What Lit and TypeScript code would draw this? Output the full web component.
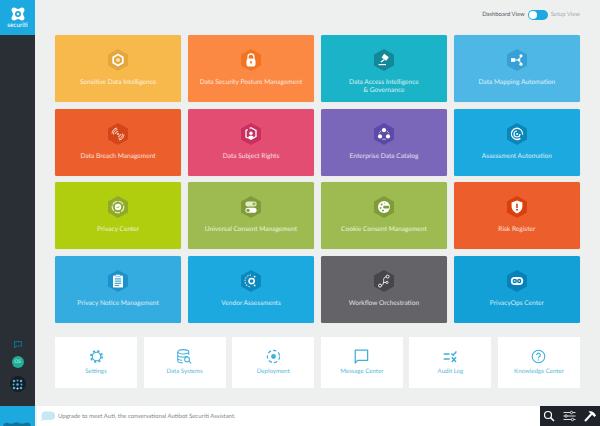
import { LitElement, html, css, svg } from "lit";
import { customElement } from "lit/decorators.js";

const W = "#fff";
const cards = [
  { label: ["Sensitive Data Intelligence"], bg: "#f8b94c", hex: "#e5a63e", icon: svg`<polygon points="10,5.5 14.8,8.2 14.8,13.8 10,16.5 5.2,13.8 5.2,8.2" fill="none" stroke="${W}" stroke-width="1.7" stroke-linejoin="round"/><circle cx="10" cy="11" r="2" fill="#fbe3b0"/>` },
  { label: ["Data Security Posture Management"], bg: "#fb8843", hex: "#f3741f", icon: svg`<path d="M7 10V8a3 3 0 0 1 6 0v2" fill="none" stroke="${W}" stroke-width="1.3"/><rect x="5.5" y="9.5" width="9" height="8" rx="2.6" fill="${W}"/><circle cx="10" cy="13" r="1" fill="#f3741f"/><rect x="9.6" y="13" width=".8" height="2.2" fill="#f3741f"/>` },
  { label: ["Data Access Intelligence", "& Governance"], bg: "#1ab3c7", hex: "#14889b", icon: svg`<g fill="${W}"><path d="M10.2 4.8l4.6 3.4-2.6 3.6-4.6-3.4z"/><path d="M9.6 10.2l1.2.9-3.6 2.4-.7-.9z"/><rect x="4.6" y="15" width="7.4" height="1.2"/></g>` },
  { label: ["Data Mapping Automation"], bg: "#4eb7e6", hex: "#35a1d6", icon: svg`<g fill="${W}"><rect x="4" y="9.2" width="4.2" height="3.6"/><circle cx="14" cy="6.8" r="1.6"/><circle cx="14" cy="15.2" r="1.6"/><circle cx="12" cy="11" r="1.4"/></g><path d="M8 11h4M14 7l-2 4 2 4" stroke="${W}" stroke-width="1" fill="none"/>` },
  { label: ["Data Breach Management"], bg: "#ec5e2b", hex: "#d5461a", icon: svg`<g fill="none" stroke="#fbdccd" stroke-width="1"><path d="M7.500 11A2.500 2.500 0 0 1 10 8.500M5.600 11.500A4.500 4.500 0 0 1 9.500 6.600M4 10.500A6.200 6.200 0 0 1 9 5"/><path d="M12.500 11A2.500 2.500 0 0 1 10 13.500M14.400 10.500A4.500 4.500 0 0 1 10.500 15.400M16 11.500A6.200 6.200 0 0 1 11 17"/></g><circle cx="10" cy="11" r="1" fill="#fbdccd"/>` },
  { label: ["Data Subject Rights"], bg: "#e34d72", hex: "#c9305f", icon: svg`<path d="M8.600 5.400L10 4.700l5 2.800v6l-2 1.200M6.800 15L5 14V7.500l1.800-1" fill="none" stroke="${W}" stroke-width="1.300"/><circle cx="10" cy="10.200" r="1.700" fill="${W}"/><path d="M6.800 15.200c.6-2 1.800-2.700 3.200-2.700s2.600.7 3.200 2.700L10 17z" fill="${W}"/>` },
  { label: ["Enterprise Data Catalog"], bg: "#7a67b9", hex: "#5d4aa8", icon: svg`<g fill="${W}"><circle cx="10" cy="7.200" r="2.100"/><circle cx="6" cy="13.400" r="2.100"/><circle cx="14" cy="13.400" r="2.100"/></g><path d="M7 8.200a5 5 0 0 0-1.800 2M13 8.200a5 5 0 0 1 1.800 2M8 16a5 5 0 0 0 4 0" fill="none" stroke="${W}" stroke-width=".6"/>` },
  { label: ["Assessment Automation"], bg: "#1ca9df", hex: "#0b86b8", icon: svg`<path d="M13 15.600A5.600 5.600 0 1 1 15.600 11" fill="none" stroke="${W}" stroke-width="1.300" stroke-linecap="round"/><path d="M10 8a3 3 0 1 0 3 3" fill="none" stroke="${W}" stroke-width="1.200"/><circle cx="10.200" cy="11" r="1.100" fill="${W}"/>` },
  { label: ["Privacy Center"], bg: "#b0cd0e", hex: "#8faa2c", icon: svg`<circle cx="10" cy="11" r="5.800" fill="none" stroke="#eef3c8" stroke-width="1.200" stroke-dasharray="5.500 1.300"/><circle cx="10" cy="11" r="3.200" fill="${W}"/><path d="M8.600 11l1 1 1.800-1.900" fill="none" stroke="#8faa2c" stroke-width=".9"/>` },
  { label: ["Universal Consent Management"], bg: "#9dbb50", hex: "#7f9c39", icon: svg`<rect x="4.400" y="5.400" width="11.200" height="5" rx="2.500" fill="#e3ebc8"/><circle cx="13" cy="7.900" r="1.600" fill="#9dbb50"/><rect x="4.400" y="11.800" width="11.200" height="5" rx="2.500" fill="${W}"/><circle cx="7" cy="14.300" r="1.600" fill="#7f9c39"/>` },
  { label: ["Cookie Consent Management"], bg: "#9dbb50", hex: "#7f9c39", icon: svg`<circle cx="10" cy="11" r="6" fill="${W}"/><g fill="#7f9c39"><circle cx="7.600" cy="8.600" r="1"/><circle cx="6.600" cy="12" r=".9"/><circle cx="9" cy="14.400" r="1"/><circle cx="10.600" cy="7" r=".6"/><rect x="9.200" y="9.800" width="6" height="2.600" rx="1.200"/></g>` },
  { label: ["Risk Register"], bg: "#ec5e2b", hex: "#d8410e", icon: svg`<path d="M10 4.600l5.400 2v4.200c0 3-2.400 5.200-5.400 6.600-3-1.400-5.400-3.600-5.400-6.600V6.600z" fill="${W}"/><rect x="9.200" y="7.600" width="1.600" height="4.600" rx=".7" fill="#d8410e"/><circle cx="10" cy="13.800" r="1" fill="#d8410e"/>` },
  { label: ["Privacy Notice Management"], bg: "#35ace0", hex: "#1b92cb", icon: svg`<rect x="5" y="5.600" width="10" height="12" rx="1.200" fill="${W}"/><rect x="7.600" y="4.400" width="4.800" height="2.200" rx=".6" fill="${W}" stroke="#1b92cb" stroke-width=".5"/><g fill="#1b92cb"><rect x="6.800" y="8.400" width="6.400" height="1"/><rect x="6.800" y="10.600" width="6.400" height="1"/><rect x="6.800" y="12.800" width="6.400" height="1"/><rect x="6.800" y="15" width="4.400" height=".9"/></g>` },
  { label: ["Vendor Assessments"], bg: "#1ca9df", hex: "#0c88bc", icon: svg`<path d="M10 5a6 6 0 0 0 0 12" fill="none" stroke="#cdeaf6" stroke-width="1.100" stroke-dasharray="1.400 1.200"/><circle cx="10.600" cy="11" r="2.600" fill="none" stroke="${W}" stroke-width="1.500"/><circle cx="13.600" cy="6.600" r=".9" fill="${W}"/><circle cx="13.600" cy="15.400" r=".9" fill="${W}"/>` },
  { label: ["Workflow Orchestration"], bg: "#636368", hex: "#46464b", icon: svg`<circle cx="13.600" cy="6.600" r="1.500" fill="none" stroke="${W}" stroke-width=".9"/><circle cx="6" cy="15.600" r="1.500" fill="none" stroke="${W}" stroke-width=".9"/><circle cx="13" cy="12.400" r="1.100" fill="none" stroke="${W}" stroke-width=".8"/><path d="M12.200 6.800c-3 .4-2.600 3.400-2.600 5 0 2-1 3.400-2.200 3.600M9.800 12.400h2.100" fill="none" stroke="${W}" stroke-width=".9"/>` },
  { label: ["PrivacyOps Center"], bg: "#12a0d7", hex: "#0a80b8", icon: svg`<rect x="3.800" y="7" width="12.400" height="8" rx="4" fill="${W}"/><circle cx="7.800" cy="11" r="2.200" fill="#0a80b8"/><circle cx="12.200" cy="11" r="2.200" fill="#0a80b8"/><circle cx="7.800" cy="11" r=".8" fill="${W}"/><circle cx="12.200" cy="11" r=".8" fill="${W}"/>` },
];

const B = "#3fb0dc";
const tools = [
  { label: "Settings", icon: svg`<circle cx="10" cy="10" r="5" fill="none" stroke="${B}" stroke-width="1.400"/><circle cx="10" cy="10" r="6.600" fill="none" stroke="${B}" stroke-width="2" stroke-dasharray="2.600 2.600"/>` },
  { label: "Data Systems", icon: svg`<g fill="none" stroke="${B}" stroke-width="1.200"><ellipse cx="8.500" cy="4.500" rx="6.500" ry="2.600"/><path d="M2 4.500v10.500c0 1.400 2.800 2.400 6 2.400M15 4.500V8M2 8.200c0 1.400 3 2.500 6.500 2.500 2 0 4-.4 5.200-1M2 12c0 1.300 2.400 2.300 5.400 2.400"/><circle cx="13" cy="13.400" r="2.800"/><path d="M15 15.400l3 2.600"/></g>` },
  { label: "Deployment", icon: svg`<circle cx="10" cy="10" r="7.200" fill="none" stroke="${B}" stroke-width="1.400" stroke-dasharray="4 2.500"/><circle cx="10" cy="10" r="2.800" fill="${B}"/>` },
  { label: "Message Center", icon: svg`<path d="M2.600 2.600h14.600v12H5.400L2.600 17.600z" fill="none" stroke="${B}" stroke-width="1.500" stroke-linejoin="round"/>` },
  { label: "Audit Log", icon: svg`<g fill="none" stroke="${B}" stroke-width="1.700"><path d="M2 7h7M2 13h7M11 6.500l2 2 4-4.500M11.500 11l5 5.500M16.500 11l-5 5.500"/></g>` },
  { label: "Knowledge Center", icon: svg`<circle cx="10" cy="10" r="7.400" fill="none" stroke="${B}" stroke-width="1.300"/><path d="M7.800 8.300a2.200 2.200 0 1 1 3.400 1.800c-.8.500-1.200.9-1.200 1.900" fill="none" stroke="${B}" stroke-width="1.300"/><circle cx="10" cy="14" r=".8" fill="${B}"/>` },
];

@customElement("app-root")
export class AppRoot extends LitElement {
  static styles = css`
    :host { display: block; width: 600px; height: 426px; overflow: hidden; background: #eef0f0; font-family: "Lato", "Open Sans", sans-serif; text-rendering: geometricPrecision; }
    .shell { display: grid; grid-template-columns: 35px 1fr; height: 426px; }
    .side { display: flex; flex-direction: column; background: #2a2e35; }
    .logo { height: 35px; background: #1ca9df; display: flex; flex-direction: column; align-items: center; color: #fff; font-size: 6.4px; line-height: 8px; padding-top: 7px; box-sizing: border-box; }
    .logo svg { display: block; margin-bottom: 1px; }
    .rail { flex: 1; display: flex; flex-direction: column; align-items: center; justify-content: flex-end; padding-bottom: 14px; }
    .rail svg { display: block; }
    .chat { margin-bottom: 8px; }
    .avatar { width: 12px; height: 12px; border-radius: 50%; background: #1fae98; color: #c5efe6; font-size: 5px; line-height: 12px; text-align: center; margin-bottom: 8px; }
    .apps { width: 16px; height: 16px; border-radius: 50%; background: #191c23; display: flex; align-items: center; justify-content: center; }
    .foot { height: 20px; background: #1ca9df; display: flex; align-items: flex-end; }
    .main { display: flex; flex-direction: column; min-width: 0; }
    .top { height: 35px; box-sizing: border-box; display: flex; justify-content: flex-end; align-items: flex-start; gap: 3px; padding: 10px 20px 0 0; font-size: 5.9px; line-height: 10px; color: #55595e; }
    .top .off { color: #a6abae; }
    .switch { width: 20px; height: 10px; border-radius: 5px; background: #1ca9df; position: relative; }
    .switch::after { content: ""; position: absolute; left: 1px; top: 1px; width: 8px; height: 8px; border-radius: 50%; background: #fff; }
    .grid { display: grid; grid-template-columns: repeat(4, 1fr); grid-auto-rows: 67px; gap: 6.67px; padding: 0 20px; }
    .card { border-radius: 1.5px; display: flex; flex-direction: column; align-items: center; padding-top: 14px; box-sizing: border-box; color: #fff; font-size: 6.6px; line-height: 7.5px; text-align: center; box-shadow: 0 0 1px rgba(0,0,0,.12); }
    .card svg { display: block; margin-bottom: 8px; }
    .card span { opacity: .8; display: block; }
    .small { display: grid; grid-template-columns: repeat(6, 1fr); gap: 6.6px; padding: 13.7px 20px 0; }
    .tool { height: 51px; background: #fff; display: flex; flex-direction: column; align-items: center; box-sizing: border-box; padding-top: 11px; color: #57b7db; font-size: 6.1px; line-height: 8px; }
    .tool svg { display: block; margin-bottom: 3px; }
    .bar { margin-top: auto; height: 20px; display: flex; padding-left: 2px; }
    .msg { flex: 1; background: #fff; display: flex; align-items: center; padding-left: 3px; gap: 3px; font-size: 6px; color: #7f898e; }
    .msg svg { display: block; }
    .actions { width: 60px; background: #1f2329; display: flex; align-items: center; gap: 8px; padding-left: 3px; box-sizing: border-box; }
    .actions svg { display: block; }
  `;

  render() {
    return html`
      <div class="shell">
        <aside class="side">
          <div class="logo">
            <svg width="14" height="14" viewBox="0 0 14 14"><path d="M3 .5C4.500 .5 5.500 2 7 2S9.500 .5 11 .5 13.500 1.500 13.500 3 12 5.500 12 7s1.500 2.500 1.500 4-1 2.500-2.500 2.500S8.500 12 7 12s-2.500 1.500-4 1.500S.5 12.500 .5 11 2 8.500 2 7 .5 4.500 .5 3 1.500 .5 3 .5z" fill="#fff"/><circle cx="7" cy="7" r="3" fill="#1ca9df"/><circle cx="7" cy="7" r="1.300" fill="#fff"/></svg>
            securiti
          </div>
          <div class="rail">
            <svg class="chat" width="8" height="7" viewBox="0 0 8 7"><path d="M.6 .6h6.800v4.400H2.500L.6 6.500z" fill="none" stroke="#0f6b86" stroke-width="1.200"/></svg>
            <div class="avatar">OS</div>
            <div class="apps">
              <svg width="11" height="11" viewBox="0 0 11 11"><g fill="#3fb6e4"><circle cx="2" cy="2" r="1.300"/><circle cx="5.500" cy="1.500" r="1"/><circle cx="9" cy="2" r="1.300"/><circle cx="1.500" cy="5.500" r="1"/><circle cx="5.500" cy="5.500" r="1.300"/><circle cx="9.500" cy="5.500" r="1"/><circle cx="2" cy="9" r="1.300"/><circle cx="5.500" cy="9.500" r="1" fill="#dff3fb"/><circle cx="9" cy="9" r="1.300"/></g></svg>
            </div>
          </div>
          <div class="foot">
            <svg width="35" height="6" viewBox="0 0 35 6" style="display:block"><path d="M3 6c1-3 3-4 5-3s4 1 6 0 3-1 5 0 4 1 6 0 5-1 6 3z" fill="#11729a"/></svg>
          </div>
        </aside>
        <main class="main">
          <div class="top"><span>Dashboard View</span><div class="switch"></div><span class="off">Setup View</span></div>
          <section class="grid">
            ${cards.map(c => html`
              <div class="card" style="background:${c.bg}">
                <svg width="20" height="22" viewBox="0 0 20 22"><polygon points="10,.8 19.200,5.800 19.200,16.200 10,21.200 .8,16.200 .8,5.800" fill="${c.hex}" stroke="${c.hex}" stroke-width="1.500" stroke-linejoin="round"/>${c.icon}</svg>
                ${c.label.map(l => html`<span>${l}</span>`)}
              </div>`)}
          </section>
          <section class="small">
            ${tools.map(t => html`
              <div class="tool">
                <svg width="17" height="17" viewBox="0 0 20 20">${t.icon}</svg>
                <span>${t.label}</span>
              </div>`)}
          </section>
          <div class="bar">
            <div class="msg">
              <svg width="15" height="11" viewBox="0 0 15 11"><path d="M5 .5h6a4 4 0 0 1 0 8.500H3L.5 10.500 2 7.500C.5 4 2 .5 5 .5z" fill="#c5e8f5"/></svg>
              <span>Upgrade to meet Auti, the conversational Autibot Securiti Assistant.</span>
            </div>
            <div class="actions">
              <svg width="12" height="12" viewBox="0 0 12 12"><circle cx="5" cy="5" r="3.500" fill="none" stroke="#fff" stroke-width="1.200"/><path d="M7.600 7.600L11 11" stroke="#fff" stroke-width="1.500"/></svg>
              <svg width="13" height="12" viewBox="0 0 13 12"><g stroke="#d7dadd" stroke-width="1" fill="#1f2329"><path d="M.5 2.500h12M.5 6h12M.5 9.500h12"/><circle cx="8.500" cy="2.500" r="1.200"/><circle cx="3" cy="6" r="1.200"/><circle cx="9.500" cy="9.500" r="1.200"/></g></svg>
              <svg width="13" height="12" viewBox="0 0 13 12"><path d="M1 11l6.500-7" stroke="#fff" stroke-width="2"/><path d="M4.500 1.500c3-.8 5-.5 7.500 4l-1.500 1.500-5.500-5z" fill="#fff"/></svg>
            </div>
          </div>
        </main>
      </div>
    `;
  }
}
